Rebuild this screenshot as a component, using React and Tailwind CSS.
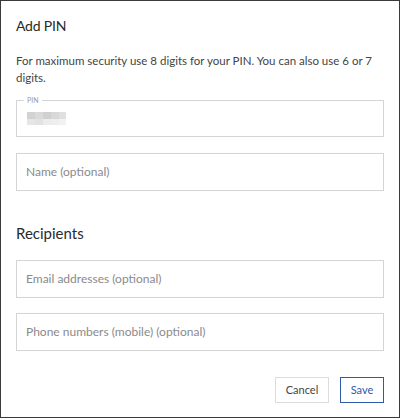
export default function App() {
  const font = { fontFamily: "Lato, 'Open Sans', sans-serif" };
  return (
    <div className="w-[400px] h-[418px] bg-white border border-[#3a3a3a] box-border px-[15px] pt-[15px] text-[#333]" style={font}>
      <h2 className="text-[14px] leading-5 font-normal text-[#2a2a2a] tracking-[-0.2px]">Add PIN</h2>
      <p className="mt-4 text-[11.5px] leading-[17px] text-[#444]">
        <span className="block whitespace-nowrap">For maximum security use 8 digits for your PIN. You can also use 6 or 7</span>
        <span className="block">digits.</span>
      </p>
      <div className="relative mt-[14px] h-[37px] border border-[#d4d4d4] flex items-center pl-[10px]">
        <span className="absolute -top-[5px] left-[7px] bg-white px-[3px] text-[7px] leading-[8px] text-[#9a9a9a]">PIN</span>
        <div className="flex flex-col">
          <div className="flex">
            <div className="w-[8px] h-[7px] bg-[#d2d2d2]" />
            <div className="w-[8px] h-[7px] bg-[#dadada]" />
            <div className="w-[8px] h-[7px] bg-[#d0d0d0]" />
            <div className="w-[8px] h-[7px] bg-[#d8d8d8]" />
            <div className="w-[7px] h-[7px] bg-[#e0e0e0]" />
          </div>
          <div className="flex">
            <div className="w-[8px] h-[6px] bg-[#e6e6e6]" />
            <div className="w-[8px] h-[6px] bg-[#e2e2e2]" />
            <div className="w-[8px] h-[6px] bg-[#ececec]" />
            <div className="w-[8px] h-[6px] bg-[#eeeeee]" />
            <div className="w-[7px] h-[6px] bg-[#f2f2f2]" />
          </div>
        </div>
      </div>
      <div className="mt-4 h-[38px] border border-[#d4d4d4] flex items-center pl-[9px] text-[12px] text-[#8a8a8a]">
        Name (optional)
      </div>
      <h2 className="mt-[32px] text-[15px] leading-5 font-normal text-[#2a2a2a]">Recipients</h2>
      <div className="mt-[17px] h-[38px] border border-[#d4d4d4] flex items-center pl-[9px] text-[12px] text-[#8a8a8a]">
        Email addresses (optional)
      </div>
      <div className="mt-[15px] h-[38px] border border-[#d4d4d4] flex items-center pl-[9px] text-[12px] text-[#8a8a8a]">
        Phone numbers (mobile) (optional)
      </div>
      <div className="mt-[26px] flex justify-end gap-[11px]">
        <button className="w-[54px] h-[26px] border border-[#dcdcdc] bg-white text-[11px] text-[#444]" style={font}>Cancel</button>
        <button className="w-[44px] h-[26px] border-[1.5px] border-[#2f5aa8] bg-white text-[11px] text-[#2f5aa8]" style={font}>Save</button>
      </div>
    </div>
  );
}
